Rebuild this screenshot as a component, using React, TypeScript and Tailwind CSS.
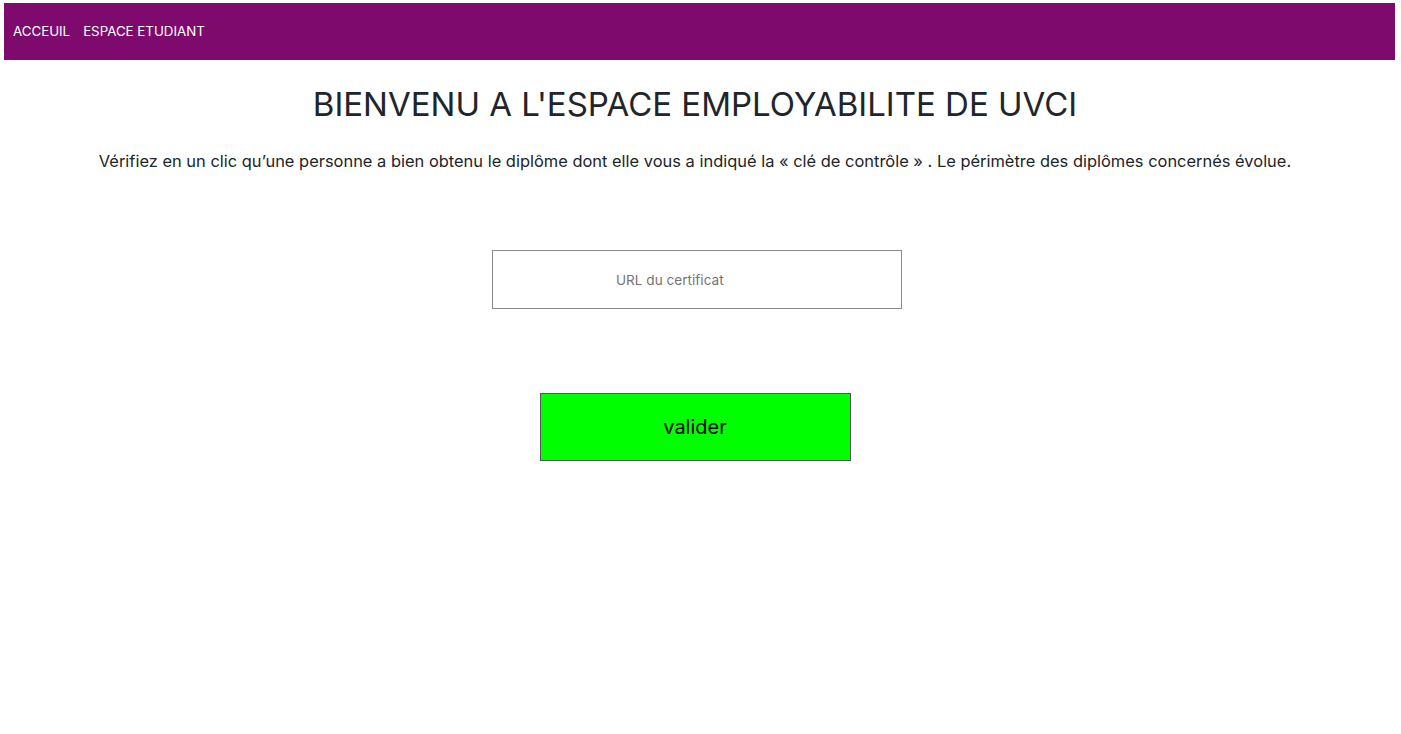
import React from "react";

export default function App() {
  return (
    <div className="min-h-[734px] bg-white text-[#212529]" style={{ fontFamily: "Inter, 'Liberation Sans', sans-serif" }}>
      <div className="pt-[3px] px-[4px] pr-[6px]">
        <nav className="h-[57px] bg-[#7e0a6d] flex items-center pl-[9px] gap-[13px] text-white text-[13.3px]">
          <a className="cursor-pointer">ACCEUIL</a>
          <a className="cursor-pointer">ESPACE ETUDIANT</a>
        </nav>
      </div>
      <main className="w-[1390px] flex flex-col items-center">
        <h1 className="mt-[22px] text-[33px] leading-[44px] font-normal">BIENVENU A L'ESPACE EMPLOYABILITE DE UVCI</h1>
        <p className="mt-[23px] text-[16.45px] leading-[24px]">
          Vérifiez en un clic qu’une personne a bien obtenu le diplôme dont elle vous a indiqué la « clé de contrôle » . Le périmètre des diplômes concernés évolue.
        </p>
        <input
          placeholder="URL du certificat"
          className="mt-[77px] ml-[4px] w-[410px] h-[59px] border border-[#8a8a8a] pl-[123px] text-[13.6px] placeholder:text-[#757575] outline-none"
        />
        <button className="mt-[84px] w-[311px] h-[68px] bg-[#00ff00] border border-[#555555] text-[20px] text-black">
          valider
        </button>
      </main>
    </div>
  );
}
